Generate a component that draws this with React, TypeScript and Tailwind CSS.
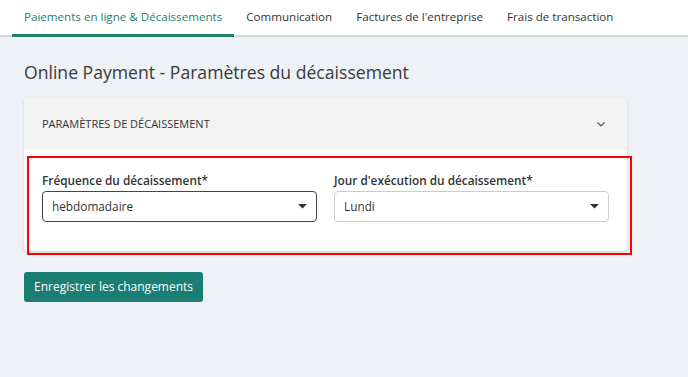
const tabs = [
  "Paiements en ligne & Décaissements",
  "Communication",
  "Factures de l'entreprise",
  "Frais de transaction",
];

function Caret() {
  return (
    <svg width="9" height="5" viewBox="0 0 9 5" className="shrink-0">
      <path d="M0 0 L9 0 L4.5 4.5 Z" fill="#333" />
    </svg>
  );
}

function SelectBox({ value, focused }: { value: string; focused?: boolean }) {
  return (
    <div
      className={`flex h-[31px] items-center justify-between rounded-[4px] border bg-white pl-[9px] pr-[9px] text-[11.8px] text-[#333] ${
        focused ? "border-[#444]" : "border-[#ccc]"
      }`}
    >
      <span>{value}</span>
      <Caret />
    </div>
  );
}

export default function App() {
  return (
    <div
      className="min-h-[377px] bg-[#eef1f5] text-[#333]"
      style={{ fontFamily: "'Open Sans', sans-serif" }}
    >
      {/* tab bar */}
      <div className="flex h-[37px] items-stretch border-b-2 border-[#d4d6d9] bg-white pl-3">
        {tabs.map((t, i) => (
          <div
            key={t}
            className={`-mb-[2px] flex items-center px-3 text-[11.6px] font-medium ${
              i === 0
                ? "border-b-[3px] border-[#1f7f71] text-[#1f7f71]"
                : "border-b-[3px] border-transparent text-[#333]"
            }`}
          >
            {t}
          </div>
        ))}
      </div>

      <div className="px-6">
        <h1 className="mt-[22px] text-[17.6px] leading-[26px] text-[#3a3a3a]">
          Online Payment - Paramètres du décaissement
        </h1>

        <div className="relative mt-[13px] w-[603px] rounded-[4px] bg-white shadow-[0_1px_3px_rgba(0,0,0,0.15)]">
          <div className="flex h-[52px] items-center justify-between rounded-t-[4px] bg-[#f3f3f3] pl-[18px] pr-[22px]">
            <span className="text-[11px] font-medium uppercase text-[#333]">
              Paramètres de décaissement
            </span>
            <svg width="8" height="5" viewBox="0 0 8 5">
              <path d="M0.5 0.5 L4 4 L7.5 0.5" fill="none" stroke="#555" strokeWidth="1.2" />
            </svg>
          </div>
          <div className="grid grid-cols-2 gap-[17px] pb-[29px] pl-[18px] pr-[18px] pt-[21px]">
            <div>
              <div className="mb-[2px] text-[11.8px] font-semibold leading-[18px] text-[#333]">
                Fréquence du décaissement*
              </div>
              <SelectBox value="hebdomadaire" focused />
            </div>
            <div>
              <div className="mb-[2px] text-[11.8px] font-semibold leading-[18px] text-[#333]">
                Jour d'exécution du décaissement*
              </div>
              <SelectBox value="Lundi" />
            </div>
          </div>
          {/* annotation frame */}
          <div className="pointer-events-none absolute left-[3px] top-[58px] h-[99px] w-[605px] border-2 border-[#ff0000]" />
        </div>

        <button className="mt-[21px] block h-[30px] rounded-[3px] bg-[#1b7e72] px-[10px] text-[12px] text-white">
          Enregistrer les changements
        </button>
      </div>
    </div>
  );
}
